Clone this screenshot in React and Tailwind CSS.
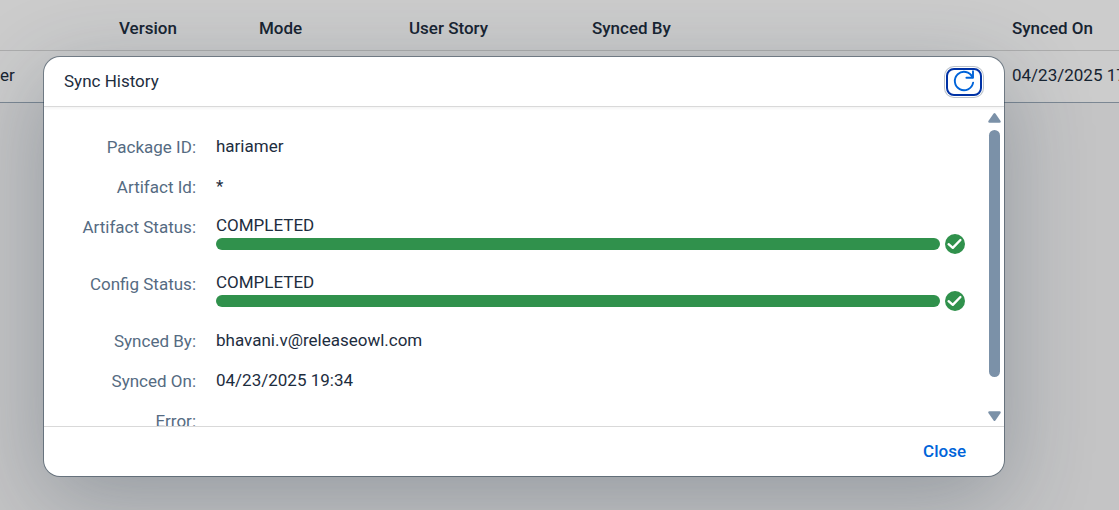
import React from "react";

const columns = [
  { title: "", width: "w-[111px]" },
  { title: "Version", width: "w-[140px]" },
  { title: "Mode", width: "w-[150px]" },
  { title: "User Story", width: "w-[183px]" },
  { title: "Synced By", width: "w-auto" },
  { title: "Synced On", width: "w-[115px]" },
];

function HistoryTable() {
  return (
    <table className="w-full table-fixed border-collapse bg-white text-left">
      <thead>
        <tr className="h-[50px] border-b border-[#d9d9d9]">
          {columns.map((column) => (
            <th
              key={column.title}
              className={`${column.width} whitespace-nowrap px-2 pt-2 font-medium`}
            >
              {column.title}
            </th>
          ))}
        </tr>
      </thead>
      <tbody>
        <tr className="h-[52px] border-b border-[#9aa9b8]">
          <td>er</td>
          <td />
          <td />
          <td />
          <td />
          <td className="overflow-hidden whitespace-nowrap px-2">04/23/2025 17</td>
        </tr>
      </tbody>
    </table>
  );
}

function RefreshIcon() {
  return (
    <svg viewBox="0 0 24 24" className="size-6" fill="none" stroke="currentColor" strokeWidth="1.9" aria-hidden="true">
      <path d="M20.4 7.2A9.2 9.2 0 1 0 21.1 12.6" strokeLinecap="round" />
      <path d="M21 1.2V7.8h-6.6" strokeLinecap="round" strokeLinejoin="round" />
    </svg>
  );
}

function SuccessIcon() {
  return (
    <svg viewBox="0 0 20 20" className="size-5 shrink-0" aria-hidden="true">
      <circle cx="10" cy="10" r="10" fill="#30914c" />
      <path d="M3.6 10.2L7.8 13.8L15.4 6" fill="none" stroke="#fff" strokeWidth="2.4" strokeLinecap="round" strokeLinejoin="round" />
    </svg>
  );
}

function Label({ children }) {
  return (
    <dt className="w-[152px] shrink-0 pt-[10px] text-right leading-5 text-[#556b82]">
      {children}:
    </dt>
  );
}

function Field({ label, children }) {
  return (
    <div className="flex h-10 shrink-0 gap-5">
      <Label>{label}</Label>
      <dd className="pt-[9px] leading-5">{children}</dd>
    </div>
  );
}

function StatusField({ label, status }) {
  return (
    <div className="flex h-[57px] shrink-0 gap-5">
      <Label>{label}</Label>
      <dd className="min-w-0 flex-1 pt-[9px]">
        <div className="leading-[18px]">{status}</div>
        <div className="flex items-center gap-[5px]">
          <div
            role="progressbar"
            aria-label={label}
            aria-valuenow={100}
            className="h-3 flex-1 rounded-full bg-[#30914c]"
          />
          <SuccessIcon />
        </div>
      </dd>
    </div>
  );
}

function ScrollBar() {
  return (
    <div className="flex w-[13px] shrink-0 flex-col items-center pb-[5px] pt-[6px] text-[#7b91a8]" aria-hidden="true">
      <svg viewBox="0 0 13 10" className="h-[10px] w-[13px]" fill="currentColor">
        <path d="M5.6.6Q6.5-.4 7.4.6L12.6 8Q13.2 9.8 11.5 9.8H1.5Q-.2 9.8.4 8Z" />
      </svg>
      <div className="flex min-h-0 w-[11px] flex-1 flex-col py-[7px]">
        <div className="h-[90%] rounded-full bg-[#7b91a8]" />
      </div>
      <svg viewBox="0 0 13 10" className="h-[10px] w-[13px]" fill="currentColor">
        <path d="M5.6 9.4Q6.5 10.4 7.4 9.4L12.6 2Q13.2.2 11.5.2H1.5Q-.2.2.4 2Z" />
      </svg>
    </div>
  );
}

function SyncHistoryDialog() {
  return (
    <section
      role="dialog"
      aria-labelledby="dialog-title"
      className="flex min-h-0 flex-1 flex-col overflow-hidden rounded-2xl bg-white shadow-[0_0_0_1px_rgba(34,53,72,0.5),0_22px_88px_0_rgba(34,53,72,0.3)]"
    >
      <header className="z-10 flex h-[50px] shrink-0 items-center justify-between border-b border-[#d9d9d9] pl-5 pr-[22px] shadow-[0_2px_2px_rgba(0,0,0,0.04)]">
        <h1 id="dialog-title">Sync History</h1>
        <button
          type="button"
          aria-label="Refresh"
          className="flex h-7 w-9 items-center justify-center rounded-lg border-2 border-[#0032a5] bg-white text-[#0064d9] shadow-[0_0_0_1px_#ffffff,0_0_0_2px_#bcc3ca]"
        >
          <RefreshIcon />
        </button>
      </header>
      <div className="flex min-h-0 flex-1 overflow-hidden pr-[3px]">
        <dl className="flex min-w-0 flex-1 flex-col overflow-hidden pr-[23px] pt-5">
          <Field label="Package ID">hariamer</Field>
          <Field label="Artifact Id">*</Field>
          <StatusField label="Artifact Status" status="COMPLETED" />
          <StatusField label="Config Status" status="COMPLETED" />
          <Field label="Synced By">bhavani.v@releaseowl.com</Field>
          <Field label="Synced On">04/23/2025 19:34</Field>
          <Field label="Error" />
        </dl>
        <ScrollBar />
      </div>
      <footer className="flex h-[50px] shrink-0 items-center justify-end border-t border-[#d9d9d9] pr-7">
        <button type="button" className="px-[10px] font-medium text-[#0064d9]">
          Close
        </button>
      </footer>
    </section>
  );
}

export default function App() {
  return (
    <div className="relative h-screen overflow-hidden bg-[#f5f6f7] font-[Roboto,sans-serif] text-[17px] text-[#1d2d3e]">
      <HistoryTable />
      <div className="absolute inset-0 flex bg-black/20 pb-[34px] pl-11 pr-[115px] pt-[57px]">
        <SyncHistoryDialog />
      </div>
    </div>
  );
}
